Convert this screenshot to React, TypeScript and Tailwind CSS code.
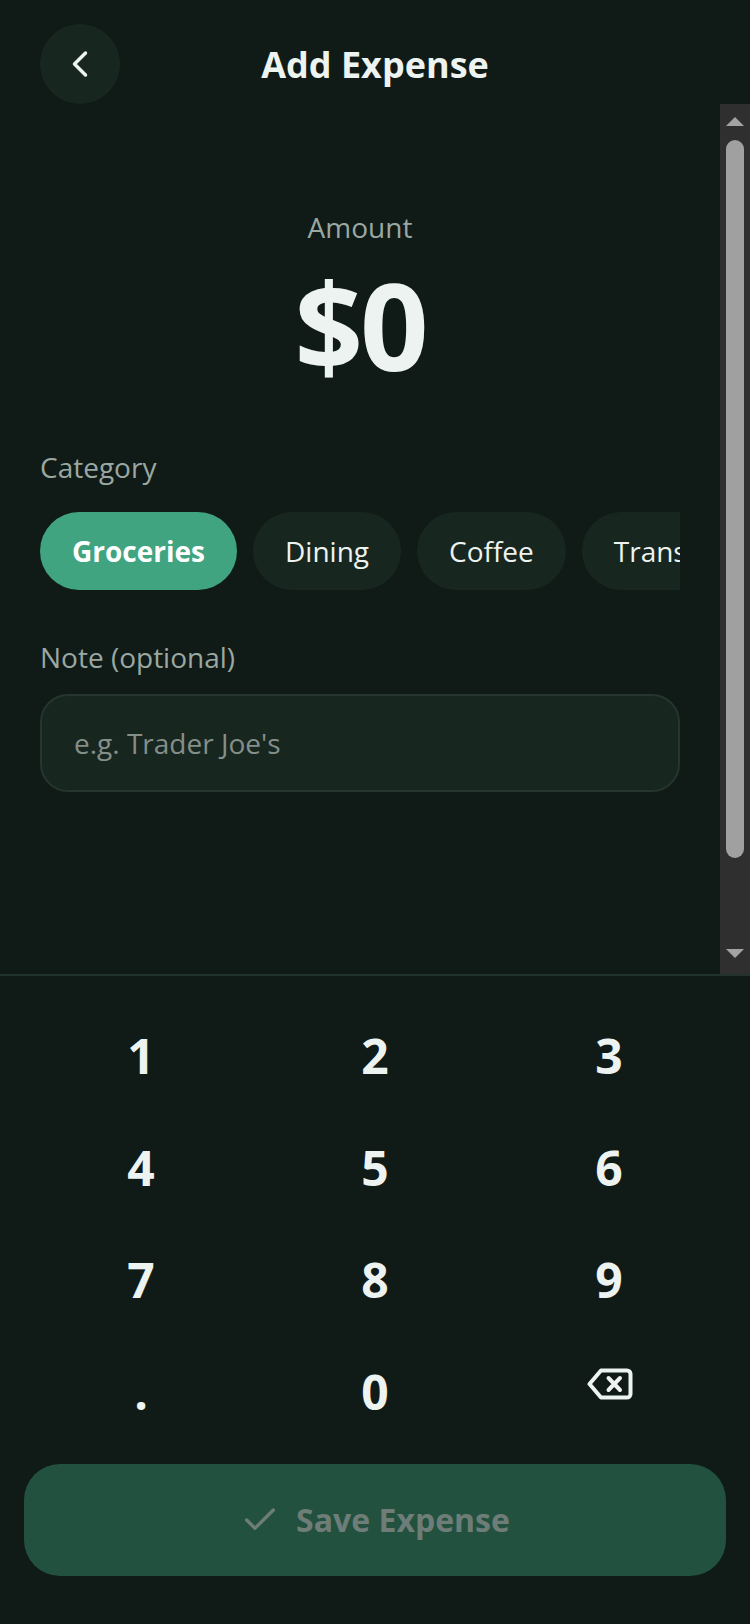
import { ChevronLeft, Check } from 'lucide-react';

const categories = ['Groceries', 'Dining', 'Coffee', 'Transport', 'Shopping'];
const keys = ['1', '2', '3', '4', '5', '6', '7', '8', '9', '.', '0', 'back'];

function BackspaceIcon() {
  return (
    <svg width="46" height="32" viewBox="0 0 46 32" fill="none" stroke="#edf3f0" strokeWidth="4" strokeLinecap="round" strokeLinejoin="round">
      <path d="M14 2.5H40a3.5 3.5 0 0 1 3.5 3.5v20a3.5 3.5 0 0 1-3.5 3.5H14L2.5 16z" />
      <path d="M21.5 10l11.5 12M33 10L21.5 22" />
    </svg>
  );
}

export default function App() {
  return (
    <div className="flex h-[1624px] w-[750px] flex-col overflow-hidden bg-[#101a17] font-['Open_Sans',sans-serif] text-[#edf3f0]">
      {/* Header */}
      <div className="flex h-[104px] shrink-0 items-start justify-between px-10 pt-6">
        <button className="flex h-20 w-20 items-center justify-center rounded-full bg-[#182620]">
          <ChevronLeft size={44} strokeWidth={1.9} />
        </button>
        <div className="mt-[16px] text-[36px] leading-[50px] font-bold">Add Expense</div>
        <div className="w-20" />
      </div>

      {/* Scroll area */}
      <div className="flex h-[870px] shrink-0">
        <div className="w-[720px] px-10">
          <div className="pt-[99px] text-center">
            <div className="text-[28px] leading-[48px] text-[#9aa8a2]">Amount</div>
            <div className="-mt-[2px] text-[120px] leading-[152px] font-bold tracking-[-3px]">$0</div>
          </div>

          <div className="mt-[46px] text-[28px] leading-[40px] text-[#9aa8a2]">Category</div>
          <div className="mt-[25px] flex gap-4 overflow-hidden">
            {categories.map((name, i) => (
              <div
                key={name}
                className={`flex h-[78px] shrink-0 items-center rounded-full px-8 text-[28px] ${
                  i === 0 ? 'bg-[#41a481] font-bold text-white' : 'bg-[#182620] text-[#edf3f0]'
                }`}
              >
                {name}
              </div>
            ))}
          </div>

          <div className="mt-[43px] text-[28px] leading-[48px] text-[#9aa8a2]">Note (optional)</div>
          <div className="mt-[13px] flex h-[98px] items-center rounded-[28px] border-2 border-[#26362f] bg-[#182620] px-8 text-[28px] text-[#858f8a]">
            e.g. Trader Joe's
          </div>
        </div>

        {/* Scrollbar */}
        <div className="flex w-[30px] flex-col items-center bg-[#2f2f2f]">
          <div className="mt-[13px] h-0 w-0 border-x-[9px] border-b-[9px] border-x-transparent border-b-[#a3a3a3]" />
          <div className="mt-[14px] h-[718px] w-[18px] rounded-full bg-[#a0a0a0]" />
          <div className="mt-[91px] h-0 w-0 border-x-[9px] border-t-[9px] border-x-transparent border-t-[#a3a3a3]" />
        </div>
      </div>

      {/* Keypad */}
      <div className="flex-1 border-t-2 border-[#22322c] px-6">
        <div className="grid grid-cols-3 pt-6">
          {keys.map((key) => (
            <div key={key} className="flex h-[112px] items-center justify-center text-[48px] font-bold">
              {key === 'back' ? (
                <span className="-mt-4 ml-0.5">
                  <BackspaceIcon />
                </span>
              ) : (
                key
              )}
            </div>
          ))}
        </div>
        <button className="mt-4 flex h-[112px] w-full items-center justify-center gap-4 rounded-[36px] bg-[#22513f] text-[32px] font-bold text-[#6e7d77]">
          <Check size={40} strokeWidth={2} />
          Save Expense
        </button>
      </div>
    </div>
  );
}
